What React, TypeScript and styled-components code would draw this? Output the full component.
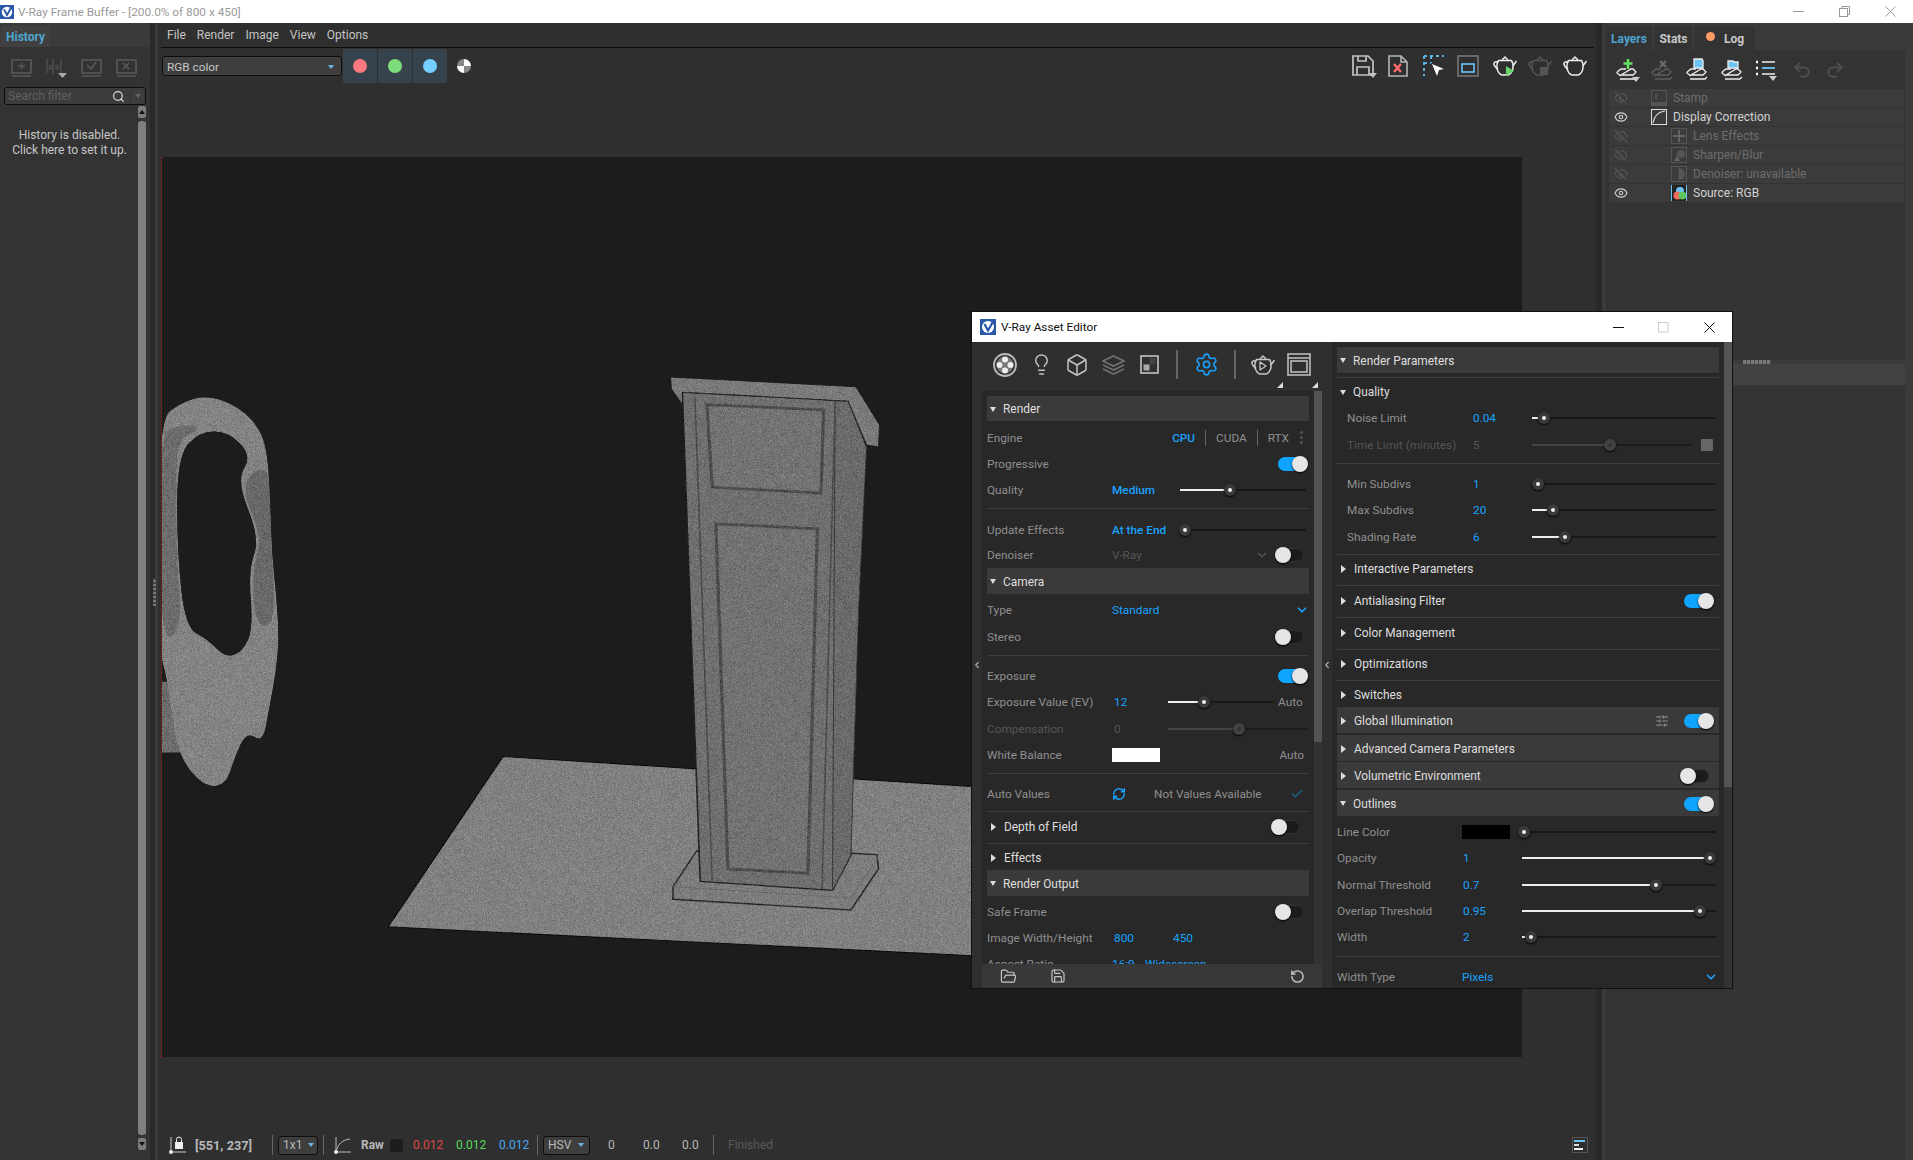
import React from "react";
import styled, { createGlobalStyle } from "styled-components";
import { Box, Check, ChevronDown, ChevronLeft, Eye, EyeOff, FolderOpen, Lightbulb, RefreshCw, RotateCcw, Save, Search, Settings, SlidersHorizontal, Undo2, Redo2 } from "lucide-react";

const Global = createGlobalStyle`
  html, body { margin: 0; padding: 0; background: #333; }
  body { font-family: Roboto, "Liberation Sans", sans-serif; font-size: 12px; overflow: hidden; }
  * { box-sizing: border-box; }
`;

const BLUE = "#19a3ff";

const Page = styled.div`position: relative; width: 1913px; height: 1160px; display: flex; flex-direction: column; background: #333; overflow: hidden;`;
const TitleBar = styled.div`height: 23px; flex: none; background: #fff; display: flex; align-items: center; color: #999; font-size: 11.8px;`;
const TitleText = styled.span`margin-left: 4px;`;
const Controls = styled.div`margin-left: auto; display: flex; align-items: center;`;
const CtlBtn = styled.span<{ $w: number }>`width: ${p => p.$w}px; display: flex; justify-content: center;`;
const Main = styled.div`flex: 1; display: flex; min-height: 0;`;

const LeftPanel = styled.div`width: 150px; flex: none; display: flex; flex-direction: column; background: #333;`;
const TabStrip = styled.div<{ $h: number; $pl: number }>`height: ${p => p.$h}px; flex: none; padding: 3px 0 0 ${p => p.$pl}px; display: flex; gap: 3px; background: #3a3a3a;`;
const Tab = styled.div<{ $w: number; $active?: boolean; $color?: string }>`width: ${p => p.$w}px; background: ${p => p.$active ? "#404040" : "#333"}; color: ${p => p.$color || "#c8c8c8"}; font-weight: 700; font-size: 12px; padding-top: 1px; display: flex; align-items: center; justify-content: center; gap: 9px;`;
const LogDot = styled.span`width: 9px; height: 9px; border-radius: 50%; background: #ff9c66; margin-top: -4px;`;
const HistTools = styled.div`height: 40px; flex: none; display: flex; align-items: center; padding: 2px 0 0 11px; gap: 14px; color: #5a5a5a;`;
const SearchBox = styled.div`height: 18px; margin: 0 4px; border: 1px solid #0c0c0c; border-radius: 3px; background: #3c3c3c; display: flex; align-items: center; padding-left: 3px; color: #5f5f5f; font-size: 12px; flex: none;`;
const SearchIcon = styled.span`margin-left: auto; color: #ddd; display: flex; padding-right: 5px; border-right: 1px solid #333;`;
const MiniCaret = styled.span<{ $c?: string; $m?: string }>`width: 0; height: 0; border-left: 3.5px solid transparent; border-right: 3.5px solid transparent; border-top: 4px solid ${p => p.$c || "#666"}; margin: ${p => p.$m || "0 4px"};`;
const HistBody = styled.div`flex: 1; display: flex; min-height: 0; padding: 1px 4px 10px 0;`;
const HistMsg = styled.div`width: 138px; padding: 22px 0 0 1px; text-align: center; color: #c6c6c6; line-height: 15px; font-size: 12px;`;
const VScroll = styled.div`width: 8px; display: flex; flex-direction: column; gap: 3px;`;
const VBtn = styled.div`height: 12px; flex: none; background: #7d7d7d; border-radius: 2px; display: flex; align-items: center; justify-content: center;`;
const VThumb = styled.div`flex: 1; background: #7f7f7f; border-radius: 3px;`;
const UpCaret = styled.span`width: 0; height: 0; border-left: 3px solid transparent; border-right: 3px solid transparent; border-bottom: 4px solid #111;`;

const Divider = styled.div<{ $w: number }>`width: ${p => p.$w}px; flex: none; background: linear-gradient(90deg, #292929 0 60%, #3a3a3a 60% 100%); display: flex; align-items: center; justify-content: center;`;
const Grip = styled.div`width: 3px; height: 28px; background: repeating-linear-gradient(0deg, #777 0 2px, #444 2px 4px);`;

const Center = styled.div`flex: 1; min-width: 0; display: flex; flex-direction: column; background: #2f2f2f;`;
const MenuBar = styled.div`height: 25px; flex: none; margin: 0 2px 0 3px; border-bottom: 1px solid #0e0e0e; display: flex; align-items: center; padding-left: 6px; gap: 11px; color: #c4c4c4; font-size: 12px;`;
const Toolbar = styled.div`height: 36px; flex: none; display: flex; align-items: center; padding: 0 9px 0 4px;`;
const Combo = styled.div<{ $w: number }>`width: ${p => p.$w}px; height: 20px; padding: 1px 4px 0; border: 1px solid #0d0d0d; border-radius: 3px; background: #3e3e3e; color: #c6c6c6; display: flex; align-items: center; justify-content: space-between; font-size: 11.8px;`;
const ChanBtn = styled.div`width: 34px; height: 34px; margin-left: 1px; background: #36434c; border-radius: 2px; display: flex; align-items: center; justify-content: center;`;
const Dot = styled.span<{ $c: string }>`width: 14px; height: 14px; border-radius: 50%; background: ${p => p.$c};`;
const AlphaDot = styled.span`width: 14px; height: 14px; margin-left: 10px; border-radius: 50%; background: conic-gradient(#fff 0 25%, #888 25% 50%, #fff 50% 75%, #888 75% 100%);`;
const ToolIcons = styled.div`margin-left: auto; display: flex; align-items: center;`;
const ToolSlot = styled.span<{ $ml: number }>`margin-left: ${p => p.$ml}px; display: flex;`;

const Stage = styled.div`flex: 1; min-height: 0; padding: 73px 0 0 3px;`;
const Canvas = styled.div`width: 1361px; height: 900px; background: #1c1c1c; border-left: 1px dotted #c02020;`;

const StatusBar = styled.div`height: 32px; flex: none; display: flex; align-items: center; padding: 2px 8px 0 11px; color: #b8b8b8; font-size: 12px;`;
const Cell = styled.div<{ $w: number; $c?: string; $b?: boolean; $fs?: number }>`width: ${p => p.$w}px; flex: none; color: ${p => p.$c || "#b8b8b8"}; font-weight: ${p => p.$b ? 700 : 400}; font-size: ${p => p.$fs || 12}px; display: flex; align-items: center;`;
const VSep = styled.span<{ $mr: number }>`width: 1px; height: 20px; background: #666; margin-right: ${p => p.$mr}px; flex: none;`;
const StatCombo = styled.div<{ $w: number; $mr: number }>`width: ${p => p.$w}px; margin-right: ${p => p.$mr}px; height: 19px; flex: none; border: 1px solid #0d0d0d; border-radius: 3px; background: #3e3e3e; display: flex; align-items: center; justify-content: space-between; padding: 0 3px 0 4px;`;
const RawSwatch = styled.span`width: 13px; height: 13px; background: #1d1d1d; border-radius: 2px;`;
const StatRight = styled.div`margin-left: auto; display: flex;`;

const RightPanel = styled.div`width: 299px; flex: none; display: flex; flex-direction: column; background: #333;`;
const LayerTools = styled.div`height: 39px; flex: none; display: flex; align-items: center; padding: 1px 0 0 9px; gap: 10px;`;
const RedoSlot = styled.span<{ $ml: number }>`margin-left: ${p => p.$ml}px; display: flex;`;
const LayerList = styled.div`margin: 0 1px 0 3px; flex: none; display: flex; flex-direction: column; gap: 1px;`;
const LayerRow = styled.div<{ $dim?: boolean; $indent?: boolean }>`height: 18px; background: #3b3b3b; display: flex; align-items: center; color: ${p => p.$dim ? "#6d6d6d" : "#d2d2d2"}; padding-left: ${p => p.$indent ? 62 : 42}px; position: relative; font-size: 12px;`;
const EyeSlot = styled.span`position: absolute; left: 5px; top: 2px; display: flex;`;
const LayerThumb = styled.span<{ $b: string }>`width: 16px; height: 16px; margin-right: 6px; border: 1px solid ${p => p.$b}; display: flex; align-items: center; justify-content: center;`;
const SplitGap = styled.div`height: 158px; flex: none;`;
const SplitBar = styled.div`height: 4px; flex: none; background: #3c3c3c; display: flex; padding-left: 137px;`;
const SplitGrip = styled.div`width: 28px; height: 4px; background: repeating-linear-gradient(90deg, #777 0 3px, #4a4a4a 3px 4px);`;
const SplitBlock = styled.div`height: 21px; flex: none; background: #424242;`;
const Edge = styled.div`width: 8px; flex: none; background: #3b3b3b;`;

const Win = styled.div`position: absolute; left: 972px; top: 312px; width: 760px; height: 676px; display: flex; flex-direction: column; background: #2f2f2f; box-shadow: 0 0 0 1px #111; overflow: hidden;`;
const WinTitle = styled.div`height: 30px; flex: none; background: #fff; display: flex; align-items: center; padding-left: 8px; color: #111; font-size: 11.8px;`;
const WinLabel = styled.span`margin-left: 5px;`;
const WinBtns = styled.div`margin-left: auto; display: flex; align-items: center;`;
const WinBody = styled.div`flex: 1; min-height: 0; display: flex;`;
const Strip = styled.div<{ $w: number }>`width: ${p => p.$w}px; flex: none; display: flex; align-items: center; justify-content: center; color: #aaa;`;
const LeftCol = styled.div`width: 340px; flex: none; display: flex; flex-direction: column;`;
const EdTools = styled.div`height: 49px; flex: none; position: relative; display: flex; align-items: center; padding: 0 0 4px 11px; color: #c4c4c4;`;
const EdSlot = styled.span<{ $w: number; $c?: string }>`width: ${p => p.$w}px; flex: none; display: flex; justify-content: center; color: ${p => p.$c || "#c4c4c4"};`;
const EdSep = styled.span`width: 2px; height: 29px; background: #666; flex: none;`;
const Corner = styled.span<{ $l: number }>`position: absolute; left: ${p => p.$l}px; bottom: 3px; width: 0; height: 0; border-left: 6px solid transparent; border-bottom: 6px solid #ddd;`;
const Pane = styled.div`flex: 1; min-height: 0; display: flex; background: #282828;`;
const PaneList = styled.div<{ $w: number; $pt: number }>`width: ${p => p.$w}px; padding: ${p => p.$pt}px 0 0 5px; overflow: hidden; flex: none;`;
const PaneScroll = styled.div<{ $w: number; $ml: number }>`width: ${p => p.$w}px; margin-left: ${p => p.$ml}px; background: #333; flex: none;`;
const PaneThumb = styled.div<{ $h: number }>`height: ${p => p.$h}px; background: #545454;`;
const Footer = styled.div`height: 24px; flex: none; background: #383838; display: flex; align-items: center; padding: 0 17px 0 18px; gap: 33px; color: #c8c8c8;`;
const FootEnd = styled.span`margin-left: auto; display: flex;`;
const RightCol = styled.div`flex: 1; min-width: 0; display: flex;`;

const Head = styled.div<{ $h: number; $fill?: boolean; $mt?: number }>`height: ${p => p.$h}px; margin-top: ${p => p.$mt || 0}px; background: ${p => p.$fill ? "#3a3a3a" : "transparent"}; display: flex; align-items: center; padding: 1px 0 0 3px; color: #dedede; font-size: 11.9px;`;
const ArrowDown = styled.span`width: 0; height: 0; border-left: 3.5px solid transparent; border-right: 3.5px solid transparent; border-top: 5px solid #ddd; margin-right: 7px; flex: none;`;
const ArrowRight = styled.span`width: 0; height: 0; border-top: 4px solid transparent; border-bottom: 4px solid transparent; border-left: 5px solid #ddd; margin: 0 8px 0 1px; flex: none;`;
const Row = styled.div<{ $h?: number; $mt?: number; $pl?: number }>`height: ${p => p.$h || 26}px; margin-top: ${p => p.$mt || 0}px; padding: 0 0 1px ${p => p.$pl || 0}px; display: flex; align-items: center; font-size: 11.8px;`;
const Label = styled.span<{ $w?: number; $dim?: boolean }>`width: ${p => p.$w || 125}px; flex: none; color: ${p => p.$dim ? "#555" : "#8f8f8f"}; white-space: nowrap;`;
const Val = styled.span<{ $w?: number; $pl?: number; $c?: string; $b?: boolean }>`width: ${p => p.$w ? `${p.$w}px` : "auto"}; padding-left: ${p => p.$pl || 0}px; flex: none; color: ${p => p.$c || BLUE}; font-weight: ${p => p.$b ? 500 : 400}; white-space: nowrap;`;
const Sep = styled.div<{ $t: number; $b: number }>`height: 1px; background: #3e3e3e; margin: ${p => p.$t}px 0 ${p => p.$b}px;`;
const End = styled.span<{ $mr?: number; $gap?: number }>`margin-left: auto; margin-right: ${p => p.$mr || 0}px; display: flex; align-items: center; gap: ${p => p.$gap || 0}px;`;
const Engine = styled.span`margin-left: auto; display: flex; align-items: center; color: #8f8f8f;`;
const EngSep = styled.span`width: 1px; height: 16px; background: #666; margin: 0 10px;`;
const Dots = styled.span`width: 3px; height: 3px; border-radius: 50%; background: #555; margin: 0 6px 0 11px; box-shadow: 0 -5px 0 #555, 0 5px 0 #555;`;
const Swatch = styled.span<{ $c: string; $mr?: number }>`width: 48px; height: 14px; background: ${p => p.$c}; flex: none; margin-right: ${p => p.$mr || 0}px;`;
const Square = styled.span`width: 12px; height: 12px; margin-left: 9px; background: #666; border-radius: 1px; flex: none;`;
const AutoTxt = styled.span<{ $ml?: number; $mr?: number }>`color: #8f8f8f; margin-left: ${p => p.$ml || 0}px; margin-right: ${p => p.$mr || 0}px;`;
const NoVal = styled.span`color: #8f8f8f; margin-left: 28px;`;

const Track = styled.div<{ $w?: number; $mr?: number; $ml?: number; $dim?: boolean }>`position: relative; height: 2px; background: ${p => p.$dim ? "#1c1c1c" : "#171717"}; ${p => p.$w ? `width: ${p.$w}px; flex: none;` : "flex: 1;"} margin-right: ${p => p.$mr || 0}px; margin-left: ${p => p.$ml || 0}px;`;
const Fill = styled.div<{ $pct: number; $dim?: boolean }>`position: absolute; left: 0; top: 0; height: 2px; width: ${p => p.$pct}%; background: ${p => p.$dim ? "#444" : "#ededed"};`;
const Knob = styled.div<{ $pct: number; $dim?: boolean }>`position: absolute; left: ${p => p.$pct}%; top: 1px; width: 12px; height: 12px; transform: translate(-50%, -50%); border-radius: 50%; background: ${p => p.$dim ? "#424242" : "#3a3a3a"}; box-shadow: 0 1px 2px #000; display: flex; align-items: center; justify-content: center;
  &::after { content: ""; width: 4px; height: 4px; border-radius: 50%; background: ${p => p.$dim ? "#333" : "#eee"}; }`;
const Slider = ({ pct, dim, w, mr, ml }: { pct: number; dim?: boolean; w?: number; mr?: number; ml?: number }) => (
  <Track $w={w} $mr={mr} $ml={ml} $dim={dim}><Fill $pct={pct} $dim={dim} /><Knob $pct={pct} $dim={dim} /></Track>
);

const SwitchBox = styled.span<{ $mr?: number }>`position: relative; width: 30px; height: 16px; flex: none; margin-right: ${p => p.$mr || 0}px; display: block;`;
const SwitchTrack = styled.span<{ $on?: boolean }>`position: absolute; left: 0; right: ${p => p.$on ? 3 : 1}px; top: 1px; bottom: 1px; border-radius: 7px; background: ${p => p.$on ? "#0fa5ff" : "#1b1b1b"}; box-shadow: ${p => p.$on ? "none" : "inset 0 0 0 1px #333"};`;
const SwitchKnob = styled.span<{ $on?: boolean }>`position: absolute; ${p => p.$on ? "right: 0;" : "left: 0;"} top: 0; width: 16px; height: 16px; border-radius: 50%; background: #e6e6e6; box-shadow: 0 1px 2px #000;`;
const Toggle = ({ on, mr }: { on?: boolean; mr?: number }) => (
  <SwitchBox $mr={mr}><SwitchTrack $on={on} /><SwitchKnob $on={on} /></SwitchBox>
);

const VLogo = ({ s = 15 }: { s?: number }) => (
  <svg width={s} height={s} viewBox="0 0 16 16"><rect width="16" height="16" fill="#2c58a8" /><circle cx="8" cy="8" r="6" fill="#fff" /><path d="M4.500 5 8 11.500 12.500 3.500" fill="none" stroke="#2c58a8" strokeWidth="2.200" /></svg>
);

const Teapot = ({ c = "#eee", children }: { c?: string; children?: React.ReactNode }) => (
  <svg width="24" height="22" viewBox="0 0 24 22" fill="none" stroke={c} strokeWidth="1.500" strokeLinejoin="round">
    <path d="M9 5 12 2l3 3" /><path d="M5.500 5.500h13c2 3 2.500 9-.5 12.500-1 1-2 2-3 2H9c-1 0-2-1-3-2C3 14.500 3.500 8.500 5.500 5.500Z" />
    <path d="M5 7.500C2.500 6 .5 7.500 1 9.500c.5 2 2.500 3.500 4 5" /><path d="M19.500 11c1.500-1 2.500-3 4-5" />{children}
  </svg>
);
const SaveIcon = () => (
  <svg width="25" height="23" viewBox="0 0 25 23" fill="none" stroke="#c4c4c4" strokeWidth="1.700"><path d="M1 1h15l5 5v14H1Z" /><path d="M6 1v5h8V1M5 20v-8h12v8" /><path d="M17 18h8l-4 5Z" fill="#c4c4c4" stroke="none" /></svg>
);
const DocX = () => (
  <svg width="20" height="22" viewBox="0 0 20 22" fill="none" stroke="#b5b5b5" strokeWidth="1.600"><path d="M1 1h12l6 6v14H1Z" /><path d="M13 1v6h6" /><path d="M6 9l7 8M13 9l-7 8" stroke="#ff6b6b" strokeWidth="2.400" /></svg>
);
const RegionIcon = () => (
  <svg width="22" height="22" viewBox="0 0 22 22" fill="none"><path d="M1 1v20M1 1h20M1 8h7M8 1v7" stroke="#5ab4e8" strokeWidth="2" strokeDasharray="3 3" /><path d="M9 9l12 5-5 1-2 6Z" fill="#fff" /></svg>
);
const FrameIcon = () => (
  <svg width="22" height="22" viewBox="0 0 22 22" fill="none"><rect x="1" y="1" width="20" height="20" stroke="#777" strokeWidth="1.600" /><rect x="5" y="9" width="12" height="8" stroke="#6cc4f5" strokeWidth="1.600" /></svg>
);
const Stack = ({ c = "#eee", top, caret }: { c?: string; top?: React.ReactNode; caret?: boolean }) => (
  <svg width="25" height="24" viewBox="0 0 25 24" fill="none" stroke={c} strokeWidth="1.300">
    <path d="M2 14l4-3h5M16 11h2l3 3-3 3H6Z" /><path d="M2 14v1l4 3M5 21h15l2-2" />{top}{caret && <path d="M17 19h8l-4 5Z" fill="#ccc" stroke="none" />}
  </svg>
);
const ListIcon = () => (
  <svg width="24" height="22" viewBox="0 0 24 22" fill="none"><path d="M1 3h2M1 9h2M1 15h2" stroke="#fff" strokeWidth="2.400" /><path d="M7 3h13M7 15h13" stroke="#eee" strokeWidth="1.600" /><path d="M7 9h13" stroke="#6cc4f5" strokeWidth="1.800" /><path d="M14 17h8l-4 5Z" fill="#ccc" /></svg>
);
const BoxPlus = ({ kind }: { kind: "add" | "ab" | "ok" | "x" }) => (
  <svg width="21" height="20" viewBox="0 0 21 20" fill="none" stroke="#5a5a5a" strokeWidth="1.600">
    {kind === "ab" ? <><path d="M1 1v14M7 0v16M15 1v14" strokeWidth="1" /><text x="2" y="12" fontSize="7" fill="#5a5a5a" stroke="none" fontFamily="Roboto">A</text><text x="9" y="12" fontSize="7" fill="#5a5a5a" stroke="none" fontFamily="Roboto">B</text><path d="M12 15h9l-4.500 5Z" fill="#aaa" stroke="none" /></> : <><path d="M1 15V2h19v13ZM1 18h19" />
    {kind === "add" && <path d="M7 8h7M10.500 5v6" />}{kind === "ok" && <path d="M6 7l4 4 5-7" />}{kind === "x" && <path d="M7 5l6 6M13 5l-6 6" />}</>}
  </svg>
);
const Lock = () => (
  <svg width="17" height="18" viewBox="0 0 17 18" fill="none"><path d="M2 1v15h15" stroke="#ccc" strokeWidth="1" /><circle cx="2" cy="16" r="2" fill="#eee" /><rect x="6" y="6" width="8" height="7" fill="#eee" /><path d="M7.500 6V3.500a2.500 2.500 0 0 1 5 0V6" stroke="#eee" /></svg>
);
const Curve = () => (
  <svg width="17" height="18" viewBox="0 0 17 18" fill="none"><path d="M2 1v15h15" stroke="#bbb" /><path d="M2 16C4 8 8 4 16 3" stroke="#bbb" /><circle cx="2" cy="16" r="2" fill="#eee" /></svg>
);
const StatIcon = () => (
  <svg width="16" height="16" viewBox="0 0 16 16" fill="none"><rect x=".5" y=".5" width="15" height="15" stroke="#555" /><path d="M2 4h11" stroke="#6cc4f5" strokeWidth="2" /><path d="M2 8h5" stroke="#ddd" strokeWidth="2" /><path d="M2 12h9" stroke="#eee" strokeWidth="2" /></svg>
);
const Thumbs = {
  stamp: <svg width="14" height="14"><rect x="3" y="3" width="2" height="5" fill="#555" /><rect x="0" y="11" width="14" height="3" fill="#555" /></svg>,
  curve: <svg width="14" height="14" fill="none"><path d="M1 13C2 6 6 2 13 1" stroke="#ddd" strokeWidth="1.200" /></svg>,
  lens: <svg width="14" height="14" fill="none"><path d="M7 1v12M1 7h12" stroke="#666" strokeWidth="2" /></svg>,
  sharp: <svg width="14" height="14"><circle cx="9" cy="6" r="4" fill="#555" /><path d="M2 13l3-5 3 5Z" fill="#666" /></svg>,
  den: <svg width="14" height="14" fill="none"><path d="M7 1a6 6 0 0 1 0 12Z" fill="#555" /><path d="M7 0v14" stroke="#555" /></svg>,
  src: <svg width="16" height="16"><rect width="16" height="16" fill="#222" /><circle cx="8" cy="6" r="4" fill="#6cc4f5" /><circle cx="5.500" cy="10.500" r="4" fill="#ef6a5a" /><circle cx="10.500" cy="10.500" r="4" fill="#5dc65d" /></svg>,
};
const BallIcon = () => (
  <svg width="24" height="24" viewBox="0 0 24 24" fill="none"><circle cx="12" cy="12" r="11" stroke="#bbb" strokeWidth="1.800" /><circle cx="12" cy="12" r="8.500" fill="#777" /><circle cx="12" cy="6.500" r="3" fill="#eee" /><circle cx="12" cy="17.500" r="3" fill="#eee" /><circle cx="6.500" cy="12" r="3" fill="#eee" /><circle cx="17.500" cy="12" r="3" fill="#eee" /></svg>
);
const StackIso = () => (
  <svg width="23" height="22" viewBox="0 0 23 22" fill="none" stroke="#707070" strokeWidth="1.600"><path d="M11.500 2 22 7l-10.500 5L1 7Z" /><path d="M1 11l10.500 5L22 11M1 15l10.500 5L22 15" /></svg>
);
const Checker = () => (
  <svg width="19" height="19" viewBox="0 0 19 19"><rect x="1" y="1" width="17" height="17" fill="none" stroke="#c4c4c4" strokeWidth="1.600" /><rect x="9.500" y="3" width="6" height="6.500" fill="#444" /><rect x="3.500" y="9.500" width="6" height="6" fill="#aaa" /></svg>
);
const WinIcon = () => (
  <svg width="24" height="23" viewBox="0 0 24 23" fill="none" stroke="#bbb" strokeWidth="1.600"><rect x="1" y="1" width="22" height="21" /><path d="M1 5h22" /><rect x="4" y="8" width="16" height="11" /></svg>
);

const smooth = (pts: number[][]) => {
  const n = pts.length;
  const mid = (a: number[], b: number[]) => [(a[0] + b[0]) / 2, (a[1] + b[1]) / 2];
  const s = mid(pts[n - 1], pts[0]);
  let d = `M${s[0]} ${s[1]}`;
  pts.forEach((p, i) => { const m = mid(p, pts[(i + 1) % n]); d += `Q${p[0]} ${p[1]} ${m[0]} ${m[1]}`; });
  return d + "Z";
};
const BLOB = smooth([[15, 135], [60, 95], [110, 78], [170, 105], [212, 155], [226, 220], [230, 330], [233, 430], [241, 520], [247, 620], [241, 700], [228, 780], [216, 858], [185, 832], [162, 890], [146, 950], [110, 958], [70, 915], [48, 850], [34, 720], [15, 640]]);
const HOLE = smooth([[95, 160], [150, 160], [195, 215], [165, 270], [210, 400], [188, 470], [197, 600], [178, 652], [145, 668], [110, 625], [68, 600], [52, 430], [52, 215]]);
const RIM = smooth([[170, 275], [215, 400], [195, 470], [202, 600], [240, 590], [233, 430], [230, 330], [226, 230]]);
const SHADE = smooth([[15, 165], [60, 145], [100, 150], [60, 175], [50, 215], [50, 430], [62, 600], [20, 640]]);

const Scene = () => (
  <svg width="1360" height="900" viewBox="162 157 1360 900">
    <defs>
      <filter id="grain" x="0" y="0" width="100%" height="100%" colorInterpolationFilters="sRGB">
        <feTurbulence type="fractalNoise" baseFrequency="0.85" numOctaves="2" seed="4" result="n" />
        <feColorMatrix in="n" type="matrix" values="1 0 0 0 0 1 0 0 0 0 1 0 0 0 0 0 0 0 0 1" result="g" />
        <feComposite in="SourceGraphic" in2="g" operator="arithmetic" k1="0" k2="1" k3="0.3" k4="-0.15" result="m" />
        <feComposite in="m" in2="SourceAlpha" operator="in" />
      </filter>
    </defs>
    <g transform="translate(150 360) scale(0.523 0.4464)" filter="url(#grain)">
      <path d="M12 720H50L60 880H12Z" fill="#6d6d6d" />
      <path fillRule="evenodd" fill="#838383" d={BLOB + HOLE} />
      <path fill="#686868" d={RIM} />
      <path fill="#6c6c6c" d={SHADE} />
      <path d="M675 888 2700 1040V1400L455 1270Z" fill="#808080" stroke="#0e0e0e" strokeWidth="2.500" />
      <path d="M1045 1100 1000 1180V1208L1340 1232 1393 1140 1390 1108 1340 1105Z" fill="#7c7c7c" stroke="#2a2a2a" strokeWidth="3" />
      <path d="M1000 1180 1340 1205 1393 1112" fill="none" stroke="#6a6a6a" strokeWidth="2" />
      <path d="M1052 1168 1018 72 1335 92 1340 1110 1305 1188Z" fill="#6f6f6f" stroke="#222" strokeWidth="3" />
      <path d="M1310 92 1335 92 1370 195 1355 560 1340 1110 1305 1188Z" fill="#6a6a6a" stroke="#3a3a3a" strokeWidth="2" />
      <path d="M1042 85 1075 1170M1285 1185 1310 95" stroke="#4c4c4c" strokeWidth="3" fill="none" />
      <path d="M1065 100 1288 112 1283 298 1075 285Z" fill="#737373" stroke="#4c4c4c" strokeWidth="6" />
      <path d="M1082 367 1276 378 1258 1150 1105 1140Z" fill="#727272" stroke="#4c4c4c" strokeWidth="6" />
      <path d="M995 38 1350 60 1395 145 1393 195 1370 190 1335 92 1018 72 1018 100 997 65Z" fill="#7a7a7a" stroke="#222" strokeWidth="2" />
    </g>
  </svg>
);

const WinMin = ({ c = "#111" }: { c?: string }) => <svg width="11" height="11"><path d="M0 5.500h11" stroke={c} /></svg>;
const WinMax = () => <svg width="11" height="11" fill="none"><rect x=".5" y=".5" width="9.500" height="9.500" stroke="#ccc" /></svg>;
const WinRestore = () => <svg width="11" height="11" fill="none" stroke="#999"><rect x=".5" y="2.500" width="8" height="8" /><path d="M3 2.500V.5h7.500v8H8.500" /></svg>;
const WinClose = ({ c = "#111" }: { c?: string }) => <svg width="11" height="11"><path d="M.5.5l10 10M10.500.5l-10 10" stroke={c} fill="none" /></svg>;

export default function App() {
  return (
    <Page>
      <Global />
      <TitleBar>
        <VLogo s={14} />
        <TitleText>V-Ray Frame Buffer - [200.0% of 800 x 450]</TitleText>
        <Controls>
          <CtlBtn $w={46}><WinMin c="#999" /></CtlBtn>
          <CtlBtn $w={46}><WinRestore /></CtlBtn>
          <CtlBtn $w={46}><WinClose c="#999" /></CtlBtn>
        </Controls>
      </TitleBar>
      <Main>
        <LeftPanel>
          <TabStrip $h={24} $pl={1}><Tab $w={49} $active $color="#4fa3cf">History</Tab></TabStrip>
          <HistTools>
            <BoxPlus kind="add" /><BoxPlus kind="ab" /><BoxPlus kind="ok" /><BoxPlus kind="x" />
          </HistTools>
          <SearchBox>Search filter<SearchIcon><Search size={13} strokeWidth={2.200} /></SearchIcon><MiniCaret /></SearchBox>
          <HistBody>
            <HistMsg>History is disabled.<br />Click here to set it up.</HistMsg>
            <VScroll><VBtn><UpCaret /></VBtn><VThumb /><VBtn><MiniCaret $c="#111" $m="0" /></VBtn></VScroll>
          </HistBody>
        </LeftPanel>
        <Divider $w={8}><Grip /></Divider>
        <Center>
          <MenuBar><span>File</span><span>Render</span><span>Image</span><span>View</span><span>Options</span></MenuBar>
          <Toolbar>
            <Combo $w={180}>RGB color<MiniCaret $c="#6cb4e0" $m="0 3px" /></Combo>
            <ChanBtn><Dot $c="#ff7a7f" /></ChanBtn>
            <ChanBtn><Dot $c="#7ddd7d" /></ChanBtn>
            <ChanBtn><Dot $c="#74ceff" /></ChanBtn>
            <AlphaDot />
            <ToolIcons>
              <ToolSlot $ml={0}><SaveIcon /></ToolSlot>
              <ToolSlot $ml={11}><DocX /></ToolSlot>
              <ToolSlot $ml={15}><RegionIcon /></ToolSlot>
              <ToolSlot $ml={12}><FrameIcon /></ToolSlot>
              <ToolSlot $ml={14}><Teapot><path d="M13 11v10l8-5Z" fill="#66d466" stroke="none" /></Teapot></ToolSlot>
              <ToolSlot $ml={11}><Teapot c="#555"><rect x="12" y="12" width="8" height="8" fill="#555" stroke="none" /></Teapot></ToolSlot>
              <ToolSlot $ml={11}><Teapot /></ToolSlot>
            </ToolIcons>
          </Toolbar>
          <Stage><Canvas><Scene /></Canvas></Stage>
          <StatusBar>
            <Cell $w={26}><Lock /></Cell>
            <Cell $w={77} $b $fs={12.700}>[551, 237]</Cell>
            <VSep $mr={5} />
            <StatCombo $w={40} $mr={5}>1x1<MiniCaret $c="#6cb4e0" $m="0" /></StatCombo>
            <VSep $mr={10} />
            <Cell $w={27}><Curve /></Cell>
            <Cell $w={29} $b>Raw</Cell>
            <Cell $w={23}><RawSwatch /></Cell>
            <Cell $w={43} $c="#e04848">0.012</Cell>
            <Cell $w={43} $c="#55dd55">0.012</Cell>
            <Cell $w={38} $c="#4aa8ef">0.012</Cell>
            <VSep $mr={5} />
            <StatCombo $w={47} $mr={18}>HSV<MiniCaret $c="#6cb4e0" $m="0 2px" /></StatCombo>
            <Cell $w={35}>0</Cell>
            <Cell $w={39}>0.0</Cell>
            <Cell $w={31}>0.0</Cell>
            <VSep $mr={14} />
            <Cell $w={50} $c="#5a5a5a">Finished</Cell>
            <StatRight><StatIcon /></StatRight>
          </StatusBar>
        </Center>
        <Divider $w={10} />
        <RightPanel>
          <TabStrip $h={27} $pl={0}>
            <Tab $w={46} $color="#4fa3cf">Layers</Tab>
            <Tab $w={37}>Stats</Tab>
            <Tab $w={60}><LogDot />Log</Tab>
          </TabStrip>
          <LayerTools>
            <Stack top={<path d="M13 1v10M8.500 5.500h9" stroke="#62e062" strokeWidth="2.600" />} caret />
            <Stack c="#5f5f5f" top={<path d="M10 3l6 6M16 3l-6 6" stroke="#6a6a6a" strokeWidth="2.200" />} />
            <Stack top={<path d="M9 1h8l1 2v7H9Z" fill="#6cc4f5" stroke="#eee" />} />
            <Stack top={<path d="M8 3h5l1 1h4v6H8Z" fill="#6cc4f5" stroke="#eee" />} />
            <ListIcon />
            <RedoSlot $ml={3}><Undo2 size={20} color="#4f4f4f" strokeWidth={2.400} /></RedoSlot>
            <RedoSlot $ml={3}><Redo2 size={20} color="#4f4f4f" strokeWidth={2.400} /></RedoSlot>
          </LayerTools>
          <LayerList>
            <LayerRow $dim><EyeSlot><EyeOff size={14} color="#555" /></EyeSlot><LayerThumb $b="#555">{Thumbs.stamp}</LayerThumb>Stamp</LayerRow>
            <LayerRow><EyeSlot><Eye size={14} color="#ccc" /></EyeSlot><LayerThumb $b="#ddd">{Thumbs.curve}</LayerThumb>Display Correction</LayerRow>
            <LayerRow $dim $indent><EyeSlot><EyeOff size={14} color="#555" /></EyeSlot><LayerThumb $b="#555">{Thumbs.lens}</LayerThumb>Lens Effects</LayerRow>
            <LayerRow $dim $indent><EyeSlot><EyeOff size={14} color="#555" /></EyeSlot><LayerThumb $b="#555">{Thumbs.sharp}</LayerThumb>Sharpen/Blur</LayerRow>
            <LayerRow $dim $indent><EyeSlot><EyeOff size={14} color="#555" /></EyeSlot><LayerThumb $b="#555">{Thumbs.den}</LayerThumb>Denoiser: unavailable</LayerRow>
            <LayerRow $indent><EyeSlot><Eye size={14} color="#ccc" /></EyeSlot><LayerThumb $b="#6cc4f5">{Thumbs.src}</LayerThumb>Source: RGB</LayerRow>
          </LayerList>
          <SplitGap />
          <SplitBar><SplitGrip /></SplitBar>
          <SplitBlock />
        </RightPanel>
        <Edge />
      </Main>

      <Win>
        <WinTitle>
          <VLogo s={16} /><WinLabel>V-Ray Asset Editor</WinLabel>
          <WinBtns>
            <CtlBtn $w={45}><WinMin /></CtlBtn>
            <CtlBtn $w={45}><WinMax /></CtlBtn>
            <CtlBtn $w={46}><WinClose /></CtlBtn>
          </WinBtns>
        </WinTitle>
        <WinBody>
          <Strip $w={10}><ChevronLeft size={14} strokeWidth={3} /></Strip>
          <LeftCol>
            <EdTools>
              <EdSlot $w={24}><BallIcon /></EdSlot>
              <EdSlot $w={48}><Lightbulb size={23} strokeWidth={1.500} /></EdSlot>
              <EdSlot $w={24}><Box size={24} strokeWidth={1.500} /></EdSlot>
              <EdSlot $w={48}><StackIso /></EdSlot>
              <EdSlot $w={24}><Checker /></EdSlot>
              <EdSlot $w={32}><EdSep /></EdSlot>
              <EdSlot $w={26} $c={BLUE}><Settings size={25} strokeWidth={1.500} /></EdSlot>
              <EdSlot $w={32}><EdSep /></EdSlot>
              <EdSlot $w={24}><Teapot c="#c8c8c8"><path d="M9 8v8l6-4Z" stroke="#c8c8c8" strokeWidth="1.200" /></Teapot></EdSlot>
              <EdSlot $w={48}><WinIcon /></EdSlot>
              <Corner $l={295} /><Corner $l={330} />
            </EdTools>
            <Pane>
              <PaneList $w={327} $pt={5}>
                <Head $h={25} $fill><ArrowDown />Render</Head>
                <Row $mt={4}><Label>Engine</Label><Engine><Val $c={BLUE} $b>CPU</Val><EngSep />CUDA<EngSep />RTX<Dots /></Engine></Row>
                <Row><Label>Progressive</Label><End $mr={1}><Toggle on /></End></Row>
                <Row><Label>Quality</Label><Val $w={68} $b>Medium</Val><Slider pct={40} mr={3} /></Row>
                <Sep $t={5} $b={8} />
                <Row><Label>Update Effects</Label><Val $w={68} $b>At the End</Val><Slider pct={4} mr={3} /></Row>
                <Row $h={25}><Label>Denoiser</Label><Val $c="#555">V-Ray</Val><End $gap={6}><ChevronDown size={14} color="#555" strokeWidth={2.500} /><Toggle mr={4} /></End></Row>
                <Head $h={26} $fill><ArrowDown />Camera</Head>
                <Row $mt={3}><Label>Type</Label><Val>Standard</Val><End><ChevronDown size={14} color={BLUE} strokeWidth={3} /></End></Row>
                <Row $mt={1}><Label>Stereo</Label><End><Toggle mr={4} /></End></Row>
                <Sep $t={5} $b={7} />
                <Row><Label>Exposure</Label><End $mr={1}><Toggle on /></End></Row>
                <Row><Label>Exposure Value (EV)</Label><Val $w={56} $pl={2}>12</Val><Slider pct={34} w={105} /><AutoTxt $ml={5}>Auto</AutoTxt></Row>
                <Row $mt={1}><Label $dim>Compensation</Label><Val $w={56} $pl={2} $c="#555">0</Val><Slider pct={50} dim /></Row>
                <Row><Label>White Balance</Label><Swatch $c="#fff" /><End $mr={5}><AutoTxt>Auto</AutoTxt></End></Row>
                <Sep $t={5} $b={7} />
                <Row><Label>Auto Values</Label><RefreshCw size={14} color={BLUE} strokeWidth={2.600} /><NoVal>Not Values Available</NoVal><End $mr={5}><Check size={14} color="#1f5a7a" strokeWidth={3} /></End></Row>
                <Sep $t={4} $b={1} />
                <Head $h={26}><ArrowRight />Depth of Field<End $mr={8}><Toggle /></End></Head>
                <Sep $t={4} $b={1} />
                <Head $h={25}><ArrowRight />Effects</Head>
                <Head $h={26} $fill><ArrowDown />Render Output</Head>
                <Row $mt={3}><Label>Safe Frame</Label><End><Toggle mr={4} /></End></Row>
                <Row><Label>Image Width/Height</Label><Val $w={61} $pl={2}>800</Val><Val>450</Val></Row>
                <Row><Label>Aspect Ratio</Label><Val $w={33}>16:9</Val><Val>Widescreen</Val></Row>
              </PaneList>
              <PaneScroll $w={8} $ml={5}><PaneThumb $h={351} /></PaneScroll>
            </Pane>
            <Footer>
              <FolderOpen size={17} strokeWidth={1.700} />
              <Save size={16} strokeWidth={1.700} />
              <FootEnd><RotateCcw size={15} strokeWidth={2.200} /></FootEnd>
            </Footer>
          </LeftCol>
          <Strip $w={10}><ChevronLeft size={14} strokeWidth={3} /></Strip>
          <RightCol>
            <Pane>
              <PaneList $w={387} $pt={5}>
                <Head $h={26} $fill><ArrowDown />Render Parameters</Head>
                <Sep $t={4} $b={3} />
                <Head $h={21}><ArrowDown />Quality</Head>
                <Row $mt={3} $pl={10}><Label $w={126}>Noise Limit</Label><Val $w={59}>0.04</Val><Slider pct={6.500} mr={3} /></Row>
                <Row $mt={1} $pl={10}><Label $w={126} $dim>Time Limit (minutes)</Label><Val $w={59} $c="#555">5</Val><Slider pct={49} w={160} dim /><Square /></Row>
                <Sep $t={5} $b={7} />
                <Row $pl={10}><Label $w={126}>Min Subdivs</Label><Val $w={59}>1</Val><Slider pct={3} mr={3} /></Row>
                <Row $pl={10}><Label $w={126}>Max Subdivs</Label><Val $w={59}>20</Val><Slider pct={11.500} mr={3} /></Row>
                <Row $mt={1} $pl={10}><Label $w={126}>Shading Rate</Label><Val $w={59}>6</Val><Slider pct={18} mr={3} /></Row>
                <Sep $t={4} $b={0} />
                <Head $h={27}><ArrowRight />Interactive Parameters</Head>
                <Sep $t={3} $b={0} />
                <Head $h={29}><ArrowRight />Antialiasing Filter<End $mr={5}><Toggle on /></End></Head>
                <Sep $t={2} $b={0} />
                <Head $h={29}><ArrowRight />Color Management</Head>
                <Sep $t={2} $b={0} />
                <Head $h={26}><ArrowRight />Optimizations</Head>
                <Sep $t={4} $b={0} />
                <Head $h={26}><ArrowRight />Switches</Head>
                <Head $h={26} $fill><ArrowRight />Global Illumination<End $mr={5} $gap={15}><SlidersHorizontal size={14} color="#8a8a8a" /><Toggle on /></End></Head>
                <Head $h={26} $mt={2} $fill><ArrowRight />Advanced Camera Parameters</Head>
                <Head $h={26} $mt={1} $fill><ArrowRight />Volumetric Environment<End $mr={9}><Toggle /></End></Head>
                <Head $h={26} $mt={2} $fill><ArrowDown />Outlines<End $mr={5}><Toggle on /></End></Head>
                <Row $mt={3}><Label>Line Color</Label><Swatch $c="#000" $mr={12} /><Slider pct={1} mr={3} /></Row>
                <Row><Label>Opacity</Label><Val $w={60} $pl={1}>1</Val><Slider pct={97} mr={3} /></Row>
                <Row $mt={1}><Label>Normal Threshold</Label><Val $w={60} $pl={1}>0.7</Val><Slider pct={69} mr={3} /></Row>
                <Row><Label>Overlap Threshold</Label><Val $w={60} $pl={1}>0.95</Val><Slider pct={92} mr={3} /></Row>
                <Row><Label>Width</Label><Val $w={60} $pl={1}>2</Val><Slider pct={4.500} mr={3} /></Row>
                <Sep $t={6} $b={7} />
                <Row><Label>Width Type</Label><Val>Pixels</Val><End $mr={1}><ChevronDown size={14} color={BLUE} strokeWidth={3} /></End></Row>
              </PaneList>
              <PaneScroll $w={8} $ml={5}><PaneThumb $h={445} /></PaneScroll>
            </Pane>
          </RightCol>
        </WinBody>
      </Win>
    </Page>
  );
}
